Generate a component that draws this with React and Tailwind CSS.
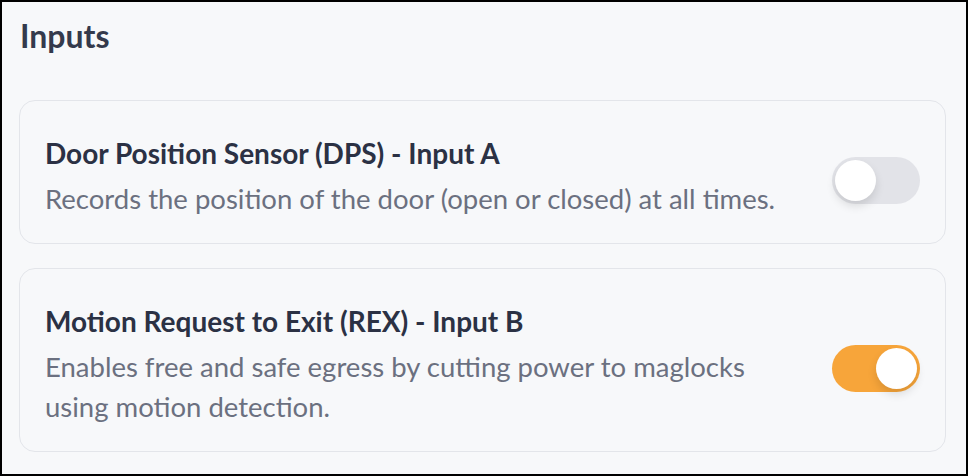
import React from "react";

function Toggle({ on }) {
  return (
    <div
      className={
        "relative mt-[6px] w-[88px] h-[47px] rounded-full shrink-0 " +
        (on ? "bg-[#f7a53a]" : "bg-[#e2e3e8]")
      }
    >
      <div
        className={
          "absolute top-[3px] w-[41px] h-[41px] rounded-full bg-white shadow-[0_5px_10px_rgba(0,0,0,0.12)] " +
          (on ? "right-[3px]" : "left-[3px]")
        }
      />
    </div>
  );
}

function Card({ title, desc, on }) {
  return (
    <div className="flex items-center justify-between rounded-[16px] border border-[#e3e5ea] pl-[25px] pr-[25px] pt-[34px] pb-[24px]">
      <div className="max-w-[752px]">
        <div className="text-[28px] leading-[36px] font-bold text-[#2b3144]">{title}</div>
        <div className="mt-[8px] text-[27.5px] leading-[40px] text-[#6b7080]">{desc}</div>
      </div>
      <Toggle on={on} />
    </div>
  );
}

export default function App() {
  return (
    <div
      className="w-[968px] h-[476px] border-2 border-black bg-[#f7f8fa] pl-[17px] pr-[20px] pt-[14px]"
      style={{ fontFamily: "Lato, 'Noto Sans', sans-serif" }}
    >
      <div className="pl-[1px] text-[32px] leading-[40px] font-bold text-[#343a4c]">Inputs</div>
      <div className="mt-[44px] flex flex-col gap-[24px]">
        <Card
          title="Door Position Sensor (DPS) - Input A"
          desc="Records the position of the door (open or closed) at all times."
          on={false}
        />
        <Card
          title="Motion Request to Exit (REX) - Input B"
          desc="Enables free and safe egress by cutting power to maglocks using motion detection."
          on={true}
        />
      </div>
    </div>
  );
}
